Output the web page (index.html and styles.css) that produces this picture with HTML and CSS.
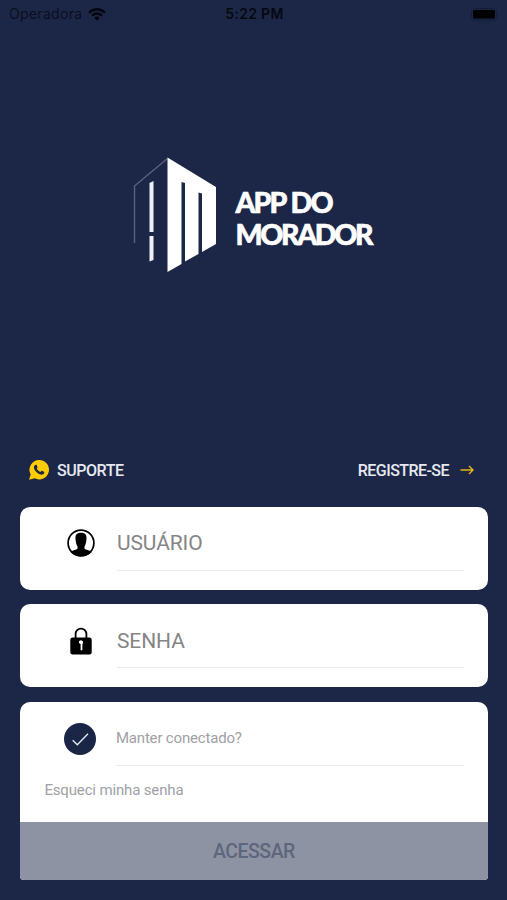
FILE: index.html
```html
<!DOCTYPE html>
<html lang="pt-BR">
<head>
<meta charset="utf-8">
<title>App do Morador</title>
<link rel="stylesheet" href="styles.css">
</head>
<body>
<header class="status">
  <div class="carrier"><span>Operadora</span>
    <svg width="18" height="13" viewBox="0 0 18 13" fill="none" stroke="#04060d" stroke-width="2.4"><path d="M1 4.6Q9-2.2 17 4.6M4 7.7Q9 3.4 14 7.7"/><path d="M6.2 9.7Q9 7.5 11.8 9.7L9 12.7Z" fill="#04060d" stroke="none"/></svg>
  </div>
  <time>5:22 PM</time>
  <svg class="battery" width="29" height="13" viewBox="0 0 29 13"><rect x=".5" y=".5" width="25" height="11.5" rx="3" fill="none" stroke="#141c38"/><rect x="2" y="2" width="22" height="8.5" rx="1.5" fill="#000"/><path d="M27 4.5q1.5 1.8 0 3.6z" fill="#141c38"/></svg>
</header>
<section class="brand">
  <svg width="84" height="117" viewBox="0 0 84 117">
    <path d="M1.5 87V30L34.5 2.500" fill="none" stroke="#59617c" stroke-width="1.4"/>
    <path d="M16.5 27 20.5 25V76H16.5ZM16.5 80H20.5V104L16.5 105.5Z" fill="#eef1f8"/>
    <path d="M34.5 1.500 83 31V88L69 96V37.500L65.5 36.5V98L52 105.500V27L48.5 26V108L34.5 116Z" fill="#fff"/>
  </svg>
  <h1><span class="line-one">APP DO</span><span class="line-two">MORADOR</span></h1>
</section>
<nav class="links">
  <a class="support"><svg width="22" height="22" viewBox="0 0 22 22"><path d="M11.4 1a9.7 9.7 0 1 1-4.6 18.3L1 20.8l1.7-5.4A9.7 9.7 0 0 1 11.4 1Z" fill="#fc0"/><path d="M7.5 5.8c.5-.3 1-.2 1.2.3l.8 1.9c.2.6-.7 1.3-.8 1.6.7 1.5 2 2.6 3.6 3.3.5-.1 1-1.4 1.6-1.1l2 1c1 .5.1 2-.7 2.5-1.7 1-4.6-.2-6.5-2-1.8-1.8-3.3-4-2.7-5.8.2-.8.8-1.4 1.5-1.7Z" fill="#1c2747"/></svg><span>SUPORTE</span></a>
  <a class="register"><span>REGISTRE-SE</span><svg width="14" height="10" viewBox="0 0 14 10" fill="none" stroke="#e5b815" stroke-width="1.4"><path d="M.5 5H13M9 1l4 4-4 4"/></svg></a>
</nav>
<main class="form">
  <div class="card field">
    <div class="icon"><svg width="28" height="28" viewBox="0 0 28 28"><circle cx="14" cy="14" r="12.9" fill="#fff" stroke="#000" stroke-width="1.7"/><path d="M8.5 8.5C8.5 4.8 11 3.8 14 3.8s5.500 1 5.500 4.700c0 1.400 0 2-.2 3.300-.4 3.200-1 4.500-1.800 5.400v2.600c1.200 1.100 4.600 1.300 7.200 3.200C21.800 26 18.200 27.300 14 27.300S6.200 26 3.600 23c2.600-1.900 5.700-2.100 6.900-3.200v-2.600c-.8-.9-1.400-2.200-1.800-5.400-.2-1.300-.2-1.900-.2-3.300Z"/></svg></div>
    <div class="entry"><span class="user-label">USUÁRIO</span></div>
  </div>
  <div class="card field">
    <div class="icon"><svg width="22" height="28" viewBox="0 0 22 28"><path d="M5.600 12V7a5.400 5.400 0 0 1 10.800 0v5" fill="none" stroke="#000" stroke-width="1.8"/><rect x=".3" y="10.500" width="21.400" height="17" rx="2.300"/><path d="M8.900 15.800a2.100 2.100 0 1 1 3.500 1.200v6.200h-1.800V17a2 2 0 0 1-1.700-1.200Z" fill="#fff"/></svg></div>
    <div class="entry"><span class="pass-label">SENHA</span></div>
  </div>
  <div class="card options">
    <div class="remember">
      <div class="icon"><svg width="32" height="32" viewBox="0 0 32 32"><circle cx="16" cy="16" r="16" fill="#1b2647"/><path d="M8.700 17.300l4.600 4.500L24 10.800" fill="none" stroke="#e8ebf3" stroke-width="1.300"/></svg></div>
      <div class="entry"><span>Manter conectado?</span></div>
    </div>
    <a class="forgot">Esqueci minha senha</a>
    <button>ACESSAR</button>
  </div>
</main>
</body>
</html>
```
FILE: styles.css
```css
* { box-sizing: border-box; }
body { margin: 0; width: 507px; height: 900px; overflow: hidden; background: #1c2747; font-family: Roboto, sans-serif; display: flex; flex-direction: column; }
svg { display: block; flex: none; }
.status { height: 28px; padding: 0 7px 0 9px; display: grid; grid-template-columns: 1fr auto 1fr; align-items: center; color: #050811; font-family: Inter, sans-serif; font-size: 14px; line-height: 28px; }
.carrier { display: flex; align-items: center; gap: 6px; color: #0a0f1f; letter-spacing: .3px; }
.status time { font-weight: 600; letter-spacing: .3px; }
.battery { justify-self: end; }
.brand { height: 428px; padding: 128px 0 0 133px; display: flex; align-items: flex-start; gap: 18.500px; }
h1 { margin: 30px 0 0; color: #fff; font: 900 28.500px/32px Lato, sans-serif; -webkit-text-stroke: .6px #fff; display: flex; flex-direction: column; white-space: nowrap; }
.line-one { letter-spacing: -1.900px; word-spacing: 1px; }
.line-two { letter-spacing: -2.350px; }
.links { height: 28px; padding: 0 33px 0 28px; display: flex; justify-content: space-between; align-items: center; color: #e6e9f1; font-size: 16px; font-weight: 500; }
.links a { display: flex; align-items: center; }
.support { gap: 7px; letter-spacing: -.45px; }
.register { gap: 11px; letter-spacing: -.55px; }
.form { margin: 22.5px 19.500px 0 20.400px; display: flex; flex-direction: column; gap: 14.500px; }
.card { background: #fff; border-radius: 10px; overflow: hidden; }
.field { height: 83px; padding: 9px 24px 0 24.600px; display: flex; }
.icon { width: 72px; display: flex; align-items: center; justify-content: center; }
.field .icon { height: 55px; }
.entry { flex: 1; border-bottom: 1px solid #e9e9ea; display: flex; align-items: center; }
.field .entry { height: 55px; color: #858585; font-size: 21px; letter-spacing: -.1px; }
.user-label, .pass-label { padding-top: 1px; }
.options { height: 178.500px; border-radius: 10px 10px 4px 4px; display: flex; flex-direction: column; }
.remember { height: 64px; padding: 9px 24px 0 23.500px; display: flex; }
.remember .icon { padding-top: 1px; }
.remember .entry { color: #a0a1a6; font-size: 15px; letter-spacing: -.18px; }
.forgot { flex: 1; padding: 15px 24px 0; color: #a0a1a6; font-size: 15px; line-height: 18px; letter-spacing: -.15px; }
button { height: 58.500px; border: 0; padding: 1px 0 0; background: #8d93a3; color: #5e667b; font: 500 19.500px/58px Roboto, sans-serif; letter-spacing: -.5px; }
```
